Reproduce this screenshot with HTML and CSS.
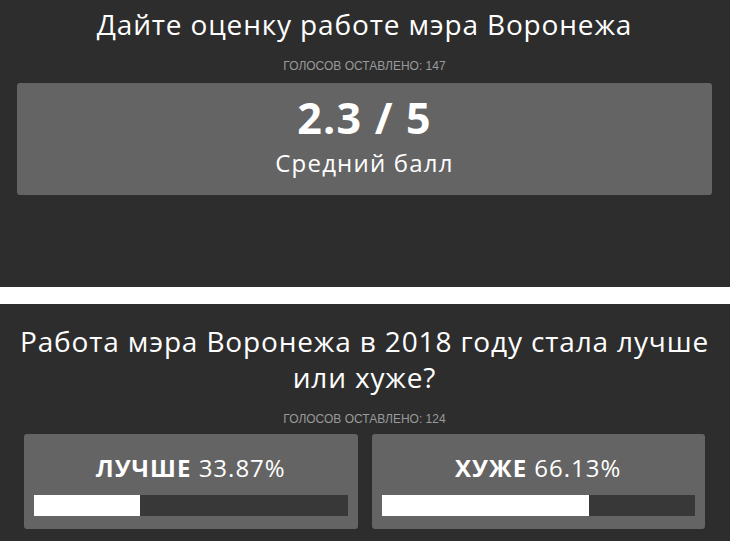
FILE: index.html
```html
<!DOCTYPE html>
<html lang="ru">
<head>
<meta charset="utf-8">
<link rel="stylesheet" href="styles.css">
</head>
<body>
<section class="poll poll-rating">
  <h1 class="poll-title">Дайте оценку работе мэра Воронежа</h1>
  <div class="poll-count">ГОЛОСОВ ОСТАВЛЕНО: 147</div>
  <div class="score-box">
    <div class="score-value">2.3 / 5</div>
    <div class="score-label">Средний балл</div>
  </div>
</section>
<section class="poll poll-choice">
  <h1 class="poll-title poll-title-2">Работа мэра Воронежа в 2018 году стала лучше или хуже?</h1>
  <div class="poll-count">ГОЛОСОВ ОСТАВЛЕНО: 124</div>
  <div class="choices">
    <div class="choice">
      <div class="choice-text"><b>ЛУЧШЕ</b> 33.87%</div>
      <div class="bar"><div class="bar-fill" style="width: 33.87%"></div></div>
    </div>
    <div class="choice">
      <div class="choice-text"><b>ХУЖЕ</b> 66.13%</div>
      <div class="bar"><div class="bar-fill" style="width: 66.13%"></div></div>
    </div>
  </div>
</section>
</body>
</html>
```
FILE: styles.css
```css
html, body {
  margin: 0;
  padding: 0;
  background: #ffffff;
}
body {
  font-family: "Open Sans", "DejaVu Sans", sans-serif;
  color: #ffffff;
}
.poll {
  background: #2d2d2d;
  padding: 0 18px 0 17px;
  overflow: hidden;
}
.poll-rating {
  height: 287px;
  box-sizing: border-box;
}
.poll-choice {
  margin-top: 17px;
  height: 237px;
  box-sizing: border-box;
}
.poll-title {
  margin: 6px 0 0;
  font-size: 28px;
  font-weight: 400;
  line-height: 36px;
  letter-spacing: 0.85px;
  text-align: center;
}
.poll-title-2 {
  margin-top: 19px;
  padding: 0 2px;
}
.poll-count {
  margin-top: 17px;
  font-family: "Liberation Sans Narrow", "Liberation Sans", sans-serif;
  font-size: 12px;
  line-height: 14px;
  color: #9a9a9a;
  text-align: center;
}
.score-box {
  margin-top: 10px;
  height: 112px;
  background: #646464;
  border-radius: 3px;
  text-align: center;
}
.score-value {
  padding-top: 6px;
  font-size: 43px;
  font-weight: 700;
  line-height: 58px;
  letter-spacing: 1.2px;
}
.score-label {
  font-size: 24px;
  line-height: 32px;
  letter-spacing: 1.2px;
}
.choices {
  display: flex;
  gap: 14px;
  padding: 0 7px;
  margin-top: 8px;
}
.choice {
  flex: 1;
  background: #646464;
  border-radius: 3px;
  padding: 17px 10px 13px;
}
.choice-text {
  font-size: 24px;
  line-height: 34px;
  letter-spacing: 1px;
  text-align: center;
  margin-bottom: 10px;
}
.choice-text b {
  font-weight: 700;
}
.bar {
  height: 21px;
  background: #383838;
}
.bar-fill {
  height: 100%;
  background: #ffffff;
}
```
